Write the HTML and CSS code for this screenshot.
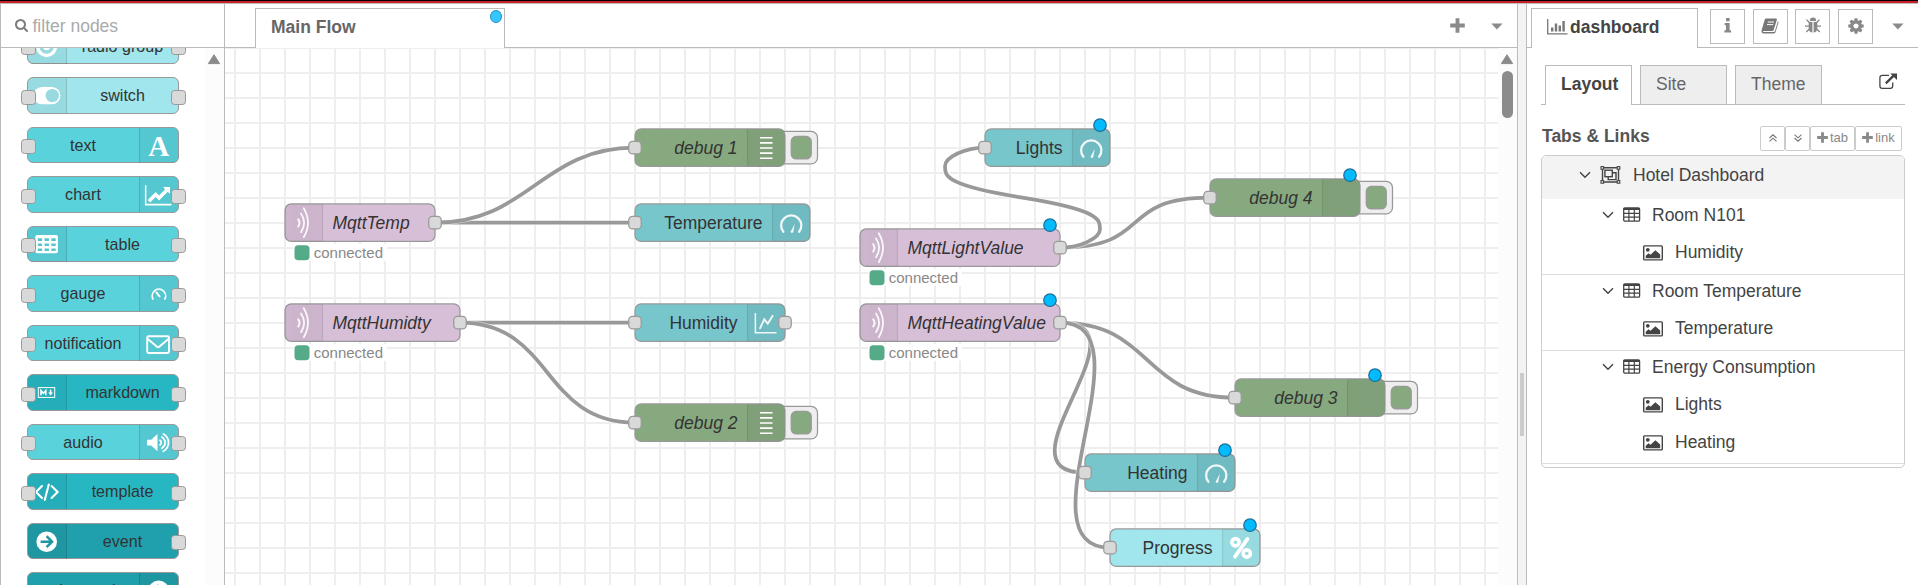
FILE: index.html
```html
<!DOCTYPE html>
<html lang="en">
<head>
<meta charset="utf-8">
<title>Main Flow</title>
<link rel="stylesheet" href="styles.css">
</head>
<body>
<svg class="defs" width="0" height="0">
  <defs>
    <symbol id="mqtt" viewBox="0 0 30 30"><g fill="none" stroke="#fff" stroke-linecap="round" opacity=".9"><path d="M10.6 12.3Q12.6 15 10.6 18" stroke-width="1.6"/><path d="M12.8 7.6Q17.8 15 12.8 22.6" stroke-width="1.4"/><path d="M15 3.4Q21.8 15 15 26.6" stroke-width="1.4"/></g></symbol>
    <symbol id="debug" viewBox="0 0 30 30"><path d="M10 7h10M10 11.1h10M10 15.2h10M10 19.3h10M10 23.4h10" stroke="#fff" stroke-width="1.3"/></symbol>
    <symbol id="gauge" viewBox="0 0 30 30"><path d="M8.7 22.3A8.1 8.1 0 1 1 21.3 22.3" fill="none" stroke="#fff" stroke-width="1.8" stroke-linecap="round" opacity=".9"/><path d="M17.8 15.8L14.4 22.4Q15.3 23.7 16.6 22.7Z" fill="#fff" opacity=".9"/></symbol>
    <symbol id="chart" viewBox="0 0 30 30"><g fill="none" stroke="#fff" opacity=".9"><path d="M6.3 7.3V23.1H23.2" stroke-width="1.2"/><path d="M9.8 20L13.4 12.3L16.2 15.8L20.4 9" stroke-width="1.5"/></g></symbol>
    <symbol id="percent" viewBox="0 0 30 30"><g fill="none" stroke="#fff"><circle cx="10.4" cy="10.6" r="2.9" stroke-width="2.9"/><circle cx="19.4" cy="19.6" r="2.9" stroke-width="2.9"/><path d="M20 8L10 22.2" stroke-width="3" stroke-linecap="round"/></g></symbol>
    <symbol id="chevron" viewBox="0 0 12 8"><path d="M1 1.2L6 6.2L11 1.2" fill="none" stroke="#444" stroke-width="1.4"/></symbol>
    <symbol id="grid" viewBox="0 0 18 16"><rect x=".7" y="1" width="15.9" height="13.2" rx="1.2" fill="none" stroke="#444" stroke-width="1.3"/><path d="M.5 2H17" stroke="#444" stroke-width="2.2"/><path d="M1 6.3H16.5M1 10.2H16.5M5.9 3V14M11.3 3V14" stroke="#444" stroke-width="1.2"/></symbol>
    <symbol id="picture" viewBox="0 0 20 16"><rect x=".7" y=".9" width="18.6" height="14" rx=".8" fill="none" stroke="#444" stroke-width="1.4"/><circle cx="4.8" cy="4.8" r="1.9" fill="#444"/><path d="M2.7 13.2V10.8L5.6 8.3L7.5 9.8L12.4 5.3L17.2 9.4V13.2Z" fill="#444"/></symbol>
    <symbol id="plus" viewBox="0 0 14 14"><path d="M5.2 .2h3.6v5h5v3.6h-5v5H5.2v-5h-5V5.2h5z" fill="#8a8a8a"/></symbol>
    <symbol id="caret" viewBox="0 0 12 7"><path d="M.3 .4h11.2L5.9 6.4z" fill="#8a8a8a"/></symbol>
    <symbol id="scroll-up" viewBox="0 0 14 11"><path d="M7 .8L12.6 9.6H1.4Z" fill="#8a8a8a" stroke="#8a8a8a" stroke-linejoin="round"/></symbol>
  </defs>
</svg>
<div class="app">
  <header class="banner"></header>
  <div class="columns">
    <aside class="palette">
      <div class="search">
        <svg width="14" height="14" viewBox="0 0 1792 1792"><path fill="#7d7d7d" d="M1152 832q0-185-131.5-316.5t-316.5-131.5-316.5 131.5-131.5 316.5 131.5 316.5 316.5 131.5 316.5-131.5 131.5-316.5zm512 832q0 52-38 90t-90 38q-54 0-90-38l-343-342q-179 124-399 124-143 0-273.5-55.5t-225-150-150-225-55.5-273.5 55.5-273.5 150-225 225-150 273.5-55.5 273.5 55.5 225 150 150 225 55.5 273.5q0 220-124 399l343 343q37 37 37 90z"/></svg>
        <span>filter nodes</span>
      </div>
      <div class="palette-body">
        <div class="palette-list">
          <div class="pnode pale in out"><svg class="picon" viewBox="0 0 38 35"><circle cx="18.6" cy="17.7" r="8.8" fill="none" stroke="#fff" stroke-width="3.4"/><circle cx="18.6" cy="17.7" r="3.5" fill="#fff"/></svg><span>radio group</span></div>
          <div class="pnode pale in out"><svg class="picon" viewBox="0 0 38 35"><rect x="5.3" y="9" width="27.2" height="17.2" rx="8.6" fill="#fff"/><circle cx="24.3" cy="17.6" r="6.7" fill="#98dae0"/></svg><span>switch</span></div>
          <div class="pnode mid right in"><svg class="picon" viewBox="0 0 38 35"><text class="serif-a" x="18.7" y="27.6">A</text></svg><span>text</span></div>
          <div class="pnode mid right in out"><svg class="picon" viewBox="0 0 38 35"><svg x="4.7" y="6.6" width="27" height="23.6" viewBox="0 0 2048 1792"><path fill="#fff" d="M2048 1536v128h-2048v-1536h128v1408h1920zm-128-1248v435q0 21-19.5 29.5t-35.5-7.5l-121-121-633 633q-10 10-23 10t-23-10l-233-233-416 416-192-192 585-585q10-10 23-10t23 10l233 233 464-464-121-121q-16-16-7.5-35.5t29.5-19.5h435q14 0 23 9t9 23z"/></svg></svg><span>chart</span></div>
          <div class="pnode mid in out"><svg class="picon" viewBox="0 0 38 35"><rect x="7.3" y="8" width="22.6" height="18.3" rx="1.8" fill="#fff"/><path d="M9.8 12.6h4.3M16.6 12.6h4.3M23.4 12.6h4.3M9.8 17.7h4.3M16.6 17.7h4.3M23.4 17.7h4.3M9.8 22.8h4.3M16.6 22.8h4.3M23.4 22.8h4.3" stroke="#55c6cf" stroke-width="2.6"/></svg><span>table</span></div>
          <div class="pnode mid right in out"><svg class="picon" viewBox="0 0 38 35"><path d="M13.3 23.6A6.7 6.7 0 1 1 24.5 23.6" fill="none" stroke="#fff" stroke-width="1.7"/><path d="M16 15.8L20 21" stroke="#fff" stroke-width="2"/></svg><span>gauge</span></div>
          <div class="pnode mid right in out"><svg class="picon" viewBox="0 0 38 35"><rect x="7.2" y="10.3" width="21.8" height="16.7" rx="1.4" fill="none" stroke="#fff" stroke-width="1.9"/><path d="M7.2 12.6L17 20.8Q18.1 21.6 19.2 20.8L29 12.6" fill="none" stroke="#fff" stroke-width="1.9"/></svg><span>notification</span></div>
          <div class="pnode dark in out"><svg class="picon" viewBox="0 0 38 35"><rect x="10.3" y="12.6" width="16.4" height="9.8" fill="none" stroke="#fff" stroke-width="1"/><path d="M13 20.3V15.6L15.4 18.2L17.8 15.6V20.3" fill="none" stroke="#fff" stroke-width="1.6"/><path d="M22.6 14.8V18.4" stroke="#fff" stroke-width="1.6"/><path d="M20.2 17.6H25L22.6 20.4Z" fill="#fff"/></svg><span>markdown</span></div>
          <div class="pnode mid right in out"><svg class="picon" viewBox="0 0 38 35"><path d="M7 14.8h4.2l6.3-5.8v17.2l-6.3-5.8H7z" fill="#fff"/><g fill="none" stroke="#fff" stroke-width="1.8" stroke-linecap="round"><path d="M20 15.2A2.9 2.9 0 0 1 20 20"/><path d="M21.8 12A6.4 6.4 0 0 1 21.8 23.2"/><path d="M23.4 9A9.8 9.8 0 0 1 23.4 26.2"/></g></svg><span>audio</span></div>
          <div class="pnode dark in out"><svg class="picon" viewBox="0 0 38 35"><path d="M14 12L8 18L14 24M23.6 12L29.6 18L23.6 24M20.8 10.6L16.7 26" fill="none" stroke="#fff" stroke-width="2.1" stroke-linecap="round"/></svg><span>template</span></div>
          <div class="pnode deep out"><svg class="picon" viewBox="0 0 38 35"><circle cx="18.7" cy="17.7" r="10.3" fill="#fff"/><path d="M12.6 17.7H23.5M18.6 12.2L24.1 17.7L18.6 23.2" fill="none" stroke="#1f98a4" stroke-width="2.5"/></svg><span>event</span></div>
          <div class="pnode deep right in out"><svg class="picon" viewBox="0 0 38 35"><circle cx="18.7" cy="17.7" r="10.3" fill="#fff"/><path d="M24.6 17.7H14M18.8 12.2L13.3 17.7L18.8 23.2" fill="none" stroke="#1f98a4" stroke-width="2.5"/></svg><span>ui control</span></div>
        </div>
        <div class="track"><svg width="14" height="11"><use href="#scroll-up"/></svg></div>
      </div>
    </aside>

    <main class="workspace">
      <div class="tabbar">
        <div class="flow-tab">Main Flow<i class="tab-dot"></i></div>
        <div class="tab-tools">
          <svg width="15" height="15"><use href="#plus"/></svg>
          <svg width="12" height="7"><use href="#caret"/></svg>
        </div>
      </div>
      <div class="canvas-row">
        <svg class="canvas" viewBox="225 48 1273 537">
          <g transform="translate(10 22.7) scale(1.25)">
            <g class="links">
              <path class="halo" d="M340 160H500"/><path d="M340 160H500"/>
              <path class="halo" d="M340 160C415 160 425 100 500 100"/><path d="M340 160C415 160 425 100 500 100"/>
              <path class="halo" d="M360 240H500"/><path d="M360 240H500"/>
              <path class="halo" d="M360 240C435 240 425 320 500 320"/><path d="M360 240C435 240 425 320 500 320"/>
              <path class="halo" d="M840 180C915 180 885 140 960 140"/><path d="M840 180C915 180 885 140 960 140"/>
              <path class="halo" d="M840 180C856 180 872 172.5 872 165S872 150 810 140S748 122.5 748 115S764 100 780 100"/><path d="M840 180C856 180 872 172.5 872 165S872 150 810 140S748 122.5 748 115S764 100 780 100"/>
              <path class="halo" d="M840 240C915 240 905 300 980 300"/><path d="M840 240C915 240 905 300 980 300"/>
              <path class="halo" d="M840 240C915 240 785 360 860 360"/><path d="M840 240C915 240 785 360 860 360"/>
              <path class="halo" d="M840 240C915 240 805 420 880 420"/><path d="M840 240C915 240 805 420 880 420"/>
            </g>

            <g transform="translate(500 85)">
              <rect class="btn" x="114" y="2" width="32" height="26" rx="5"/><rect class="btn-in" x="125" y="6" width="16" height="18" rx="4"/>
              <rect class="body debug" width="120" height="30" rx="5"/><path class="shade" d="M90 0h25a5 5 0 0 1 5 5v20a5 5 0 0 1-5 5h-25z"/><path class="sep" d="M90 .5v29"/>
              <use href="#debug" x="90" width="30" height="30"/><text class="it end" x="82" y="20">debug 1</text><rect class="port" x="-5" y="10" width="10" height="10" rx="3"/>
            </g>
            <g transform="translate(500 305)">
              <rect class="btn" x="114" y="2" width="32" height="26" rx="5"/><rect class="btn-in" x="125" y="6" width="16" height="18" rx="4"/>
              <rect class="body debug" width="120" height="30" rx="5"/><path class="shade" d="M90 0h25a5 5 0 0 1 5 5v20a5 5 0 0 1-5 5h-25z"/><path class="sep" d="M90 .5v29"/>
              <use href="#debug" x="90" width="30" height="30"/><text class="it end" x="82" y="20">debug 2</text><rect class="port" x="-5" y="10" width="10" height="10" rx="3"/>
            </g>
            <g transform="translate(960 125)">
              <rect class="btn" x="114" y="2" width="32" height="26" rx="5"/><rect class="btn-in" x="125" y="6" width="16" height="18" rx="4"/>
              <rect class="body debug" width="120" height="30" rx="5"/><path class="shade" d="M90 0h25a5 5 0 0 1 5 5v20a5 5 0 0 1-5 5h-25z"/><path class="sep" d="M90 .5v29"/>
              <text class="it end" x="82" y="20">debug 4</text><rect class="port" x="-5" y="10" width="10" height="10" rx="3"/><circle class="dot" cx="112" cy="-3" r="5"/>
            </g>
            <g transform="translate(980 285)">
              <rect class="btn" x="114" y="2" width="32" height="26" rx="5"/><rect class="btn-in" x="125" y="6" width="16" height="18" rx="4"/>
              <rect class="body debug" width="120" height="30" rx="5"/><path class="shade" d="M90 0h25a5 5 0 0 1 5 5v20a5 5 0 0 1-5 5h-25z"/><path class="sep" d="M90 .5v29"/>
              <text class="it end" x="82" y="20">debug 3</text><rect class="port" x="-5" y="10" width="10" height="10" rx="3"/><circle class="dot" cx="112" cy="-3" r="5"/>
            </g>

            <g transform="translate(500 145)">
              <rect class="body dash" width="140" height="30" rx="5"/><path class="shade" d="M110 0h25a5 5 0 0 1 5 5v20a5 5 0 0 1-5 5h-25z"/><path class="sep" d="M110 .5v29"/>
              <use href="#gauge" x="110" width="30" height="30"/><text class="end" x="102" y="20">Temperature</text><rect class="port" x="-5" y="10" width="10" height="10" rx="3"/>
            </g>
            <g transform="translate(500 225)">
              <rect class="body dash" width="120" height="30" rx="5"/><path class="shade" d="M90 0h25a5 5 0 0 1 5 5v20a5 5 0 0 1-5 5h-25z"/><path class="sep" d="M90 .5v29"/>
              <use href="#chart" x="90" width="30" height="30"/><text class="end" x="82" y="20">Humidity</text><rect class="port" x="-5" y="10" width="10" height="10" rx="3"/><rect class="port" x="115" y="10" width="10" height="10" rx="3"/>
            </g>
            <g transform="translate(780 85)">
              <rect class="body dash" width="100" height="30" rx="5"/><path class="shade" d="M70 0h25a5 5 0 0 1 5 5v20a5 5 0 0 1-5 5h-25z"/><path class="sep" d="M70 .5v29"/>
              <use href="#gauge" x="70" width="30" height="30"/><text class="end" x="62" y="20">Lights</text><rect class="port" x="-5" y="10" width="10" height="10" rx="3"/><circle class="dot" cx="92" cy="-3" r="5"/>
            </g>
            <g transform="translate(860 345)">
              <rect class="body dash" width="120" height="30" rx="5"/><path class="shade" d="M90 0h25a5 5 0 0 1 5 5v20a5 5 0 0 1-5 5h-25z"/><path class="sep" d="M90 .5v29"/>
              <use href="#gauge" x="90" width="30" height="30"/><text class="end" x="82" y="20">Heating</text><rect class="port" x="-5" y="10" width="10" height="10" rx="3"/><circle class="dot" cx="112" cy="-3" r="5"/>
            </g>
            <g transform="translate(880 405)">
              <rect class="body progress" width="120" height="30" rx="5"/><path class="shade" d="M90 0h25a5 5 0 0 1 5 5v20a5 5 0 0 1-5 5h-25z"/><path class="sep" d="M90 .5v29"/>
              <use href="#percent" x="90" width="30" height="30"/><text class="end" x="82" y="20">Progress</text><rect class="port" x="-5" y="10" width="10" height="10" rx="3"/><circle class="dot" cx="112" cy="-3" r="5"/>
            </g>

            <g transform="translate(220 145)">
              <rect class="clear" x="6.5" y="32" width="75" height="13.5"/><rect class="led" x="7.6" y="33" width="12" height="12" rx="3"/><text class="status" x="23" y="43.3">connected</text>
              <rect class="body mqtt" width="120" height="30" rx="5"/><path class="shade" d="M30 0h-25a5 5 0 0 0-5 5v20a5 5 0 0 0 5 5h25z"/><path class="sep" d="M30 .5v29"/>
              <use href="#mqtt" width="30" height="30"/><text class="it" x="38" y="20">MqttTemp</text><rect class="port" x="115" y="10" width="10" height="10" rx="3"/>
            </g>
            <g transform="translate(220 225)">
              <rect class="clear" x="6.5" y="32" width="75" height="13.5"/><rect class="led" x="7.6" y="33" width="12" height="12" rx="3"/><text class="status" x="23" y="43.3">connected</text>
              <rect class="body mqtt" width="140" height="30" rx="5"/><path class="shade" d="M30 0h-25a5 5 0 0 0-5 5v20a5 5 0 0 0 5 5h25z"/><path class="sep" d="M30 .5v29"/>
              <use href="#mqtt" width="30" height="30"/><text class="it" x="38" y="20">MqttHumidty</text><rect class="port" x="135" y="10" width="10" height="10" rx="3"/>
            </g>
            <g transform="translate(680 165)">
              <rect class="clear" x="6.5" y="32" width="75" height="13.5"/><rect class="led" x="7.6" y="33" width="12" height="12" rx="3"/><text class="status" x="23" y="43.3">connected</text>
              <rect class="body mqtt" width="160" height="30" rx="5"/><path class="shade" d="M30 0h-25a5 5 0 0 0-5 5v20a5 5 0 0 0 5 5h25z"/><path class="sep" d="M30 .5v29"/>
              <use href="#mqtt" width="30" height="30"/><text class="it" x="38" y="20">MqttLightValue</text><rect class="port" x="155" y="10" width="10" height="10" rx="3"/><circle class="dot" cx="152" cy="-3" r="5"/>
            </g>
            <g transform="translate(680 225)">
              <rect class="clear" x="6.5" y="32" width="75" height="13.5"/><rect class="led" x="7.6" y="33" width="12" height="12" rx="3"/><text class="status" x="23" y="43.3">connected</text>
              <rect class="body mqtt" width="160" height="30" rx="5"/><path class="shade" d="M30 0h-25a5 5 0 0 0-5 5v20a5 5 0 0 0 5 5h25z"/><path class="sep" d="M30 .5v29"/>
              <use href="#mqtt" width="30" height="30"/><text class="it" x="38" y="20">MqttHeatingValue</text><rect class="port" x="155" y="10" width="10" height="10" rx="3"/><circle class="dot" cx="152" cy="-3" r="5"/>
            </g>
          </g>
        </svg>
        <div class="track"><svg width="14" height="11"><use href="#scroll-up"/></svg><i class="thumb"></i></div>
      </div>
    </main>

    <div class="separator"><i class="grip"></i></div>

    <aside class="sidebar">
      <div class="side-tabs">
        <div class="side-tab">
          <svg width="21" height="16" viewBox="0 0 21 16"><path d="M.7 0V14.8H20.5" fill="none" stroke="#777" stroke-width="1.3"/><path d="M5.2 12.5V8.5M9 12.5V4.5M12.8 12.5V6.5M16.6 12.5V2" stroke="#777" stroke-width="2.4"/></svg>
          <span>dashboard</span>
        </div>
        <div class="side-buttons">
          <div class="sq"><svg width="8" height="15" viewBox="0 0 8 15"><path d="M2 0h3.6v3.3H2zM.6 5h5v7.2h1.5V14.4H.4V12.2H2V7.2H.6z" fill="#888"/></svg></div>
          <div class="sq"><svg width="18" height="16" viewBox="0 0 18 16"><path d="M5.2.5H15.2Q16.2.6 15.8 2L12.7 12Q12.3 13 11.2 13H3.2Q1.8 13.2 2 14H12.6Q13.6 14 14 13L16.9 3.2Q17.8 3.6 17.4 4.8L14.5 14.2Q14 15.6 12.6 15.6H2.6Q.2 15.2.6 12.2L3.7 1.8Q4 .6 5.2.5Z" fill="#777"/><path d="M6.8 4H13M6 6.6H12.2" stroke="#fff" stroke-width="1"/></svg></div>
          <div class="sq"><svg width="16" height="17" viewBox="0 0 16 17"><path d="M4.8 4A3.2 3.4 0 0 1 11.2 4Z" fill="#888"/><path d="M3.7 5H7.4V15.6Q3.7 15.2 3.7 11ZM8.6 5H12.3V11Q12.3 15.2 8.6 15.6Z" fill="#888"/><path d="M1.5 2.6L4.3 5.5M14.5 2.6L11.7 5.5M0 9.2H4M16 9.2H12M1.3 15L4.4 12M14.7 15L11.6 12" stroke="#888" stroke-width="1.3"/></svg></div>
          <div class="sq"><svg width="18" height="18" viewBox="0 0 1792 1792"><path fill="#888" d="M1152 896q0-106-75-181t-181-75-181 75-75 181 75 181 181 75 181-75 75-181zm512-109v222q0 12-8 23t-20 13l-185 28q-19 54-39 91 35 50 107 138 10 12 10 25t-9 23q-27 37-99 108t-94 71q-12 0-26-9l-138-108q-44 23-91 38-16 136-29 186-7 28-36 28h-222q-14 0-24.5-8.5t-11.5-21.5l-28-184q-49-16-90-37l-141 107q-10 9-25 9-14 0-25-11-126-114-165-168-7-10-7-23 0-12 8-23 15-21 51-66.5t54-70.5q-27-50-41-99l-183-27q-13-2-21-12.5t-8-23.5v-222q0-12 8-23t19-13l186-28q14-46 39-92-40-57-107-138-10-12-10-24 0-10 9-23 26-36 98.5-107.5t94.5-71.5q13 0 26 10l138 107q44-23 91-38 16-136 29-186 7-28 36-28h222q14 0 24.5 8.5t11.5 21.5l28 184q49 16 90 37l142-107q9-9 24-9 13 0 25 10 129 119 165 170 7 8 7 22 0 12-8 23-15 21-51 66.5t-54 70.5q26 50 41 98l183 28q13 2 21 12.5t8 23.5z"/></svg></div>
        </div>
        <svg class="side-caret" width="12" height="7"><use href="#caret"/></svg>
      </div>
      <div class="inner-tabs">
        <div class="inner-tab active">Layout</div>
        <div class="inner-tab">Site</div>
        <div class="inner-tab">Theme</div>
        <svg class="external" width="19" height="17" viewBox="0 0 19 17"><path d="M10 2.4H3.2Q.9 2.4.9 4.7V13Q.9 15.3 3.2 15.3H11.4Q13.7 15.3 13.7 13V9.6" fill="none" stroke="#444" stroke-width="1.3"/><path d="M6.8 10.4L15.4 1.9" stroke="#444" stroke-width="2.4"/><path d="M11.3.4H18V7Z" fill="#444"/></svg>
      </div>
      <div class="section-head">
        <h2>Tabs &amp; Links</h2>
        <div class="mini-group">
          <div class="mini"><svg width="8" height="8" viewBox="0 0 8 8"><path d="M.5 4L4 .8L7.5 4M.5 7.4L4 4.2L7.5 7.4" fill="none" stroke="#777" stroke-width="1.1"/></svg></div>
          <div class="mini"><svg width="8" height="8" viewBox="0 0 8 8"><path d="M.5 .6L4 3.8L7.5 .6M.5 4L4 7.2L7.5 4" fill="none" stroke="#777" stroke-width="1.1"/></svg></div>
          <div class="mini tab"><svg width="11" height="11"><use href="#plus"/></svg>tab</div>
          <div class="mini link"><svg width="11" height="11"><use href="#plus"/></svg>link</div>
        </div>
      </div>
      <div class="tree">
        <div class="tree-root"><svg width="12" height="8"><use href="#chevron"/></svg>
          <svg class="root-icon" width="21" height="18" viewBox="0 0 21 18"><g fill="none" stroke="#444" stroke-width="1.4"><path d="M2.5 1.8H18.5V16H2.5Z"/><rect x="4.9" y="4.2" width="7.4" height="6.5"/><path d="M12.3 6.8H16V13.6H8.2V10.7"/></g><g fill="#f3f3f3" stroke="#444" stroke-width="1.1"><rect x="1" y=".6" width="2.6" height="2.6"/><rect x="17.2" y=".6" width="2.6" height="2.6"/><rect x="1" y="14.6" width="2.6" height="2.6"/><rect x="17.2" y="14.6" width="2.6" height="2.6"/></g></svg>Hotel Dashboard</div>
        <div class="group">
          <div class="group-head"><svg width="12" height="8"><use href="#chevron"/></svg><svg class="gi" width="18" height="16"><use href="#grid"/></svg>Room N101</div>
          <div class="item"><svg width="20" height="16"><use href="#picture"/></svg>Humidity</div>
        </div>
        <div class="group">
          <div class="group-head"><svg width="12" height="8"><use href="#chevron"/></svg><svg class="gi" width="18" height="16"><use href="#grid"/></svg>Room Temperature</div>
          <div class="item"><svg width="20" height="16"><use href="#picture"/></svg>Temperature</div>
        </div>
        <div class="group last">
          <div class="group-head"><svg width="12" height="8"><use href="#chevron"/></svg><svg class="gi" width="18" height="16"><use href="#grid"/></svg>Energy Consumption</div>
          <div class="item"><svg width="20" height="16"><use href="#picture"/></svg>Lights</div>
          <div class="item"><svg width="20" height="16"><use href="#picture"/></svg>Heating</div>
        </div>
      </div>
    </aside>
  </div>
</div>
</body>
</html>
```
FILE: styles.css
```css
* { box-sizing: border-box; }
body {
  margin: 0;
  overflow: hidden;
  background: #fff;
  font-family: "Liberation Sans", Arial, Helvetica, sans-serif;
  font-size: 17.5px;
  color: #444;
}
svg { display: block; flex: none; }
.defs { position: absolute; }
.app { display: flex; flex-direction: column; height: 585px; }
.banner { flex: none; height: 4px; background: linear-gradient(#000 0 1px, #c7202a 1px 3px, #c4bcbc 3px 4px); }
.columns { flex: 1; min-height: 0; display: flex; }

/* palette */
.palette { width: 225px; border-left: 1px solid #bbb; border-right: 1px solid #bbb; display: flex; flex-direction: column; }
.search { flex: none; height: 44px; padding: 0 0 9px 14px; border-bottom: 1px solid #bbb; display: flex; align-items: flex-end; gap: 3.5px; color: #aaa; line-height: 20px; }
.search svg { margin-bottom: 6px; }
.search span { margin-bottom: 2px; }
.palette-body { flex: 1; min-height: 0; display: flex; overflow: hidden; }
.palette-list { flex: 1; padding-left: 26px; display: flex; flex-direction: column; gap: 13.03px; margin-top: -20.2px; }
.pnode { position: relative; flex: none; width: 152px; height: 36.5px; border: 1px solid #999; border-radius: 6px; display: flex; font-size: 16.1px; color: #333; }
.pnode.right { flex-direction: row-reverse; }
.pnode span { flex: 1; text-align: center; line-height: 34px; }
.pnode.right span { padding-right: 1px; }
.picon { width: 39px; height: 35px; background: rgba(0,0,0,.05); border-right: 1px solid rgba(0,0,0,.12); border-radius: 5px 0 0 5px; }
.right .picon { border-right: 0; border-left: 1px solid rgba(0,0,0,.12); border-radius: 0 5px 5px 0; }
.pale { background: #a0e6ec; }
.mid { background: #5ad2dc; }
.dark { background: #27b7c3; }
.deep { background: #20a0ac; }
.in::before, .out::after { content: ""; position: absolute; top: 11.5px; width: 13px; height: 13px; background: #d9d9d9; border: 1px solid #999; border-radius: 3.5px; }
.in::before { left: -6.6px; }
.out::after { right: -8px; }
.serif-a { font: bold 29px "Liberation Serif", serif; fill: #fff; text-anchor: middle; }
.track { flex: none; width: 19px; background: #fcfcfc; display: flex; flex-direction: column; align-items: center; padding-top: 6px; }
.palette .track { align-items: flex-start; padding-left: 2px; }
.thumb { width: 11px; height: 47px; margin-top: 6px; border-radius: 6px; background: #8b8b8b; }

/* workspace */
.workspace { width: 1292px; display: flex; flex-direction: column; }
.workspace .track { padding-right: 1px; }
.tabbar { flex: none; height: 44px; padding: 4px 14px 0 30px; border-bottom: 1px solid #bbb; display: flex; justify-content: space-between; }
.flow-tab { position: relative; width: 250px; height: 40px; padding-left: 15px; border: 1px solid #bbb; border-bottom: 0; background: #fff; font-weight: bold; color: #666; line-height: 36px; }
.tab-dot { position: absolute; right: 2px; top: 1px; width: 12px; height: 13px; border-radius: 50%; border: 1px solid #2a8fc4; background: #33c8ff; }
.tab-tools { display: flex; align-items: center; gap: 26px; padding-bottom: 5px; }
.tab-tools svg + svg { margin-top: 3px; }
.canvas-row { flex: 1; min-height: 0; display: flex; }
.canvas {
  width: 1273px; height: 537px;
  background-image: linear-gradient(90deg, #eee 2px, transparent 2px), linear-gradient(#eee 2px, transparent 2px);
  background-size: 25px 25px;
  background-position: 9px 0, 0 -1px;
}
.canvas text { font-size: 14px; fill: #333; }
.canvas .end { text-anchor: end; }
.canvas .it { font-style: italic; }
.canvas .status { font-size: 12px; fill: #888; }
.links path { fill: none; stroke: #999; stroke-width: 3; }
.links .halo { stroke: #fff; stroke-width: 4.5; opacity: .5; }
.body { stroke: #999; }
.body.debug, .btn-in { fill: #87a980; }
.body.dash { fill: #77c6cc; }
.body.progress { fill: #a0e6ec; }
.body.mqtt { fill: #d8bfd8; }
.shade { fill: #000; fill-opacity: .05; }
.sep { stroke: #000; stroke-opacity: .1; fill: none; }
.btn { fill: #eee; stroke: #999; }
.btn-in { stroke: #999; }
.port { fill: #d9d9d9; stroke: #999; }
.dot { fill: #00bcff; stroke: #1a6f9c; }
.clear { fill: #fff; }
.led { fill: #5a8; }

.separator { width: 10px; border-left: 1px solid #bbb; border-right: 1px solid #bbb; background: #f3f3f3; display: flex; align-items: center; justify-content: center; padding-top: 220px; padding-bottom: 0; }
.grip { width: 4px; height: 63px; background: #ccc; }

/* sidebar */
.sidebar { flex: 1; display: flex; flex-direction: column; }
.side-tabs { height: 44px; border-bottom: 1px solid #bbb; padding: 4px 14px 0 4px; display: flex; }
.side-tab { width: 167px; height: 40px; padding-left: 15px; border: 1px solid #bbb; border-bottom: 0; background: #fff; display: flex; gap: 2px; font-weight: bold; line-height: 36px; }
.side-tab svg { margin-top: 10px; }
.side-buttons { display: flex; gap: 7.7px; margin: 1px 0 0 12px; }
.sq { width: 35px; height: 35px; border: 1px solid #bbb; display: flex; align-items: center; justify-content: center; padding-bottom: 2px; }
.side-caret { margin: 15px 0 0 auto; }
.inner-tabs { height: 40px; margin: 17px 13px 0 14px; padding-left: 4px; border-bottom: 1px solid #bbb; display: flex; gap: 8px; }
.inner-tab { width: 87px; height: 39px; padding-left: 15px; border: 1px solid #bbb; border-bottom: 0; background: #eee; color: #666; line-height: 36px; }
.inner-tab.active { height: 40px; background: #fff; color: #444; font-weight: bold; }
.external { margin: 8px 7px 0 auto; }
.section-head { display: flex; justify-content: space-between; margin: 21px 16px 0 15px; }
h2 { margin: 0; font-size: 17.5px; line-height: 21px; color: #555; }
.mini-group { display: flex; }
.mini { width: 25px; height: 25px; border: 1px solid #ccc; border-radius: 2px; display: flex; align-items: center; justify-content: center; gap: 2px; font-size: 13px; color: #888; padding-bottom: 2px; }
.mini.tab { width: 45px; }
.mini.link { width: 47px; }
.tree { margin: 4px 13px 0 14px; height: 313px; border: 1px solid #ccc; border-radius: 5px; overflow: hidden; }
.tree-root { height: 43px; padding: 0 0 5px 37px; background: #f3f3f3; display: flex; align-items: center; }
.root-icon { margin: 0 12px 0 9px; }
.group { border-bottom: 1px solid #ddd; height: 76px; }
.group.last { height: 113px; }
.group-head { height: 34px; padding: 0 0 2px 60px; display: flex; align-items: center; }
.gi { margin: 0 11px 0 9px; }
.item { height: 38px; padding: 1px 0 0 101px; display: flex; align-items: center; gap: 12px; }
```
